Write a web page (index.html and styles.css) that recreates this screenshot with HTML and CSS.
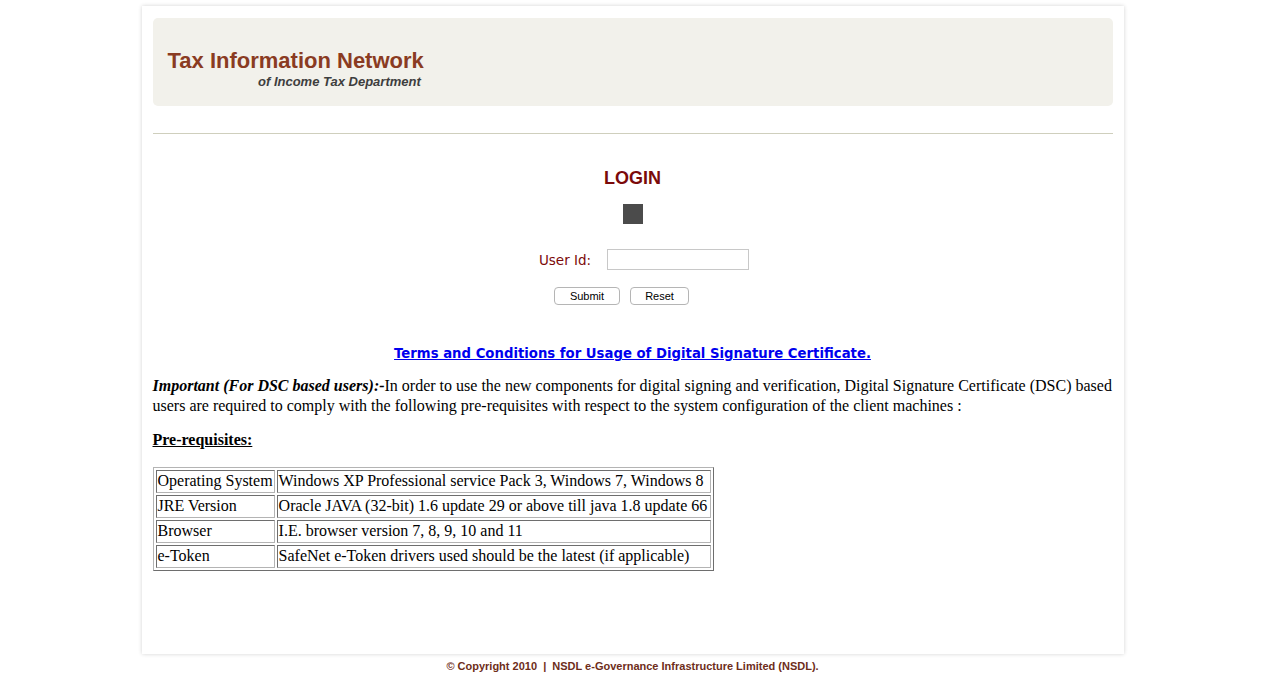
FILE: index.html
```html
<!DOCTYPE html>
<html>
<head>
<meta charset="utf-8">
<title>TIN Login</title>
<link rel="stylesheet" href="styles.css">
</head>
<body>
<div class="page">
  <div class="header">
    <div class="brand">
      <div class="brand-title">Tax Information Network</div>
      <div class="brand-sub">of Income Tax Department</div>
    </div>
  </div>
  <div class="rule"></div>
  <div class="login">
    <div class="login-title">LOGIN</div>
    <div class="square"></div>
    <div class="field">
      <label class="field-label">User Id:</label>
      <input class="field-input" type="text">
    </div>
    <div class="buttons">
      <button class="btn btn-submit">Submit</button>
      <button class="btn btn-reset">Reset</button>
    </div>
  </div>
  <div class="terms"><a href="#">Terms and Conditions for Usage of Digital Signature Certificate.</a></div>
  <p class="note"><b><i>Important (For DSC based users):-</i></b>In order to use the new components for digital signing and verification, Digital Signature Certificate (DSC) based users are required to comply with the following pre-requisites with respect to the system configuration of the client machines :</p>
  <p class="prereq">Pre-requisites:</p>
  <table class="req">
    <tr><td>Operating System</td><td class="wide">Windows XP Professional service Pack 3, Windows 7, Windows 8</td></tr>
    <tr><td>JRE Version</td><td class="wide">Oracle JAVA (32-bit) 1.6 update 29 or above till java 1.8 update 66</td></tr>
    <tr><td>Browser</td><td class="wide">I.E. browser version 7, 8, 9, 10 and 11</td></tr>
    <tr><td>e-Token</td><td class="wide">SafeNet e-Token drivers used should be the latest (if applicable)</td></tr>
  </table>
</div>
<div class="footer">© Copyright 2010 &nbsp;|&nbsp; NSDL e-Governance Infrastructure Limited (NSDL).</div>
</body>
</html>
```
FILE: styles.css
```css
html, body { margin: 0; padding: 0; background: #fff; }
body { font-family: "Liberation Serif", "Times New Roman", serif; color: #000; }
.page {
  width: 960px;
  margin: 6px auto 0;
  padding: 12px 11px 0;
  height: 636px;
  background: #fff;
  box-shadow: 0 0 4px rgba(0,0,0,0.18);
}
.header {
  height: 88px;
  background: #f2f1eb;
  border-radius: 5px;
  display: flex;
  align-items: flex-start;
}
.brand { margin: 30px 0 0 15px; display: flex; flex-direction: column; align-items: flex-end; }
.brand-title {
  font-family: "Liberation Sans", Arial, sans-serif;
  font-weight: bold;
  font-size: 22px;
  line-height: 26px;
  color: #8a3b22;
}
.brand-sub {
  font-family: "Liberation Sans", Arial, sans-serif;
  font-weight: bold;
  font-style: italic;
  font-size: 13px;
  line-height: 14px;
  color: #3e3e3e;
  margin-right: 3px;
  margin-top: 1px;
}
.rule { height: 1px; background: #cfcfbd; margin-top: 27px; }
.login { display: flex; flex-direction: column; align-items: center; }
.login-title {
  margin-top: 33px;
  font-family: "Liberation Sans", Arial, sans-serif;
  font-weight: bold;
  font-size: 18px;
  line-height: 22px;
  color: #7b0a0a;
}
.square { width: 20px; height: 20px; background: #4b4b4b; margin-top: 15px; }
.field { display: flex; align-items: center; margin-top: 25px; margin-left: 23px; }
.field-label {
  font-family: "DejaVu Sans", Verdana, sans-serif;
  font-size: 13.5px;
  color: #7b0a0a;
  margin-right: 16px;
}
.field-input {
  width: 142px; height: 21px; box-sizing: border-box;
  border: 1px solid #c8c8c8; padding: 0; margin: 0;
}
.buttons { display: flex; gap: 10px; margin-top: 17px; margin-right: 22px; }
.btn {
  height: 18px; box-sizing: border-box;
  font-family: "Liberation Sans", Arial, sans-serif;
  font-size: 11px;
  background: #fff;
  border: 1px solid #b5b5b5;
  border-radius: 4px;
  padding: 0;
  color: #000;
}
.btn-submit { width: 66px; }
.btn-reset { width: 59px; }
.terms { text-align: center; margin-top: 40px; line-height: 16px; }
.terms a {
  font-family: "DejaVu Sans", Verdana, sans-serif;
  font-weight: bold;
  font-size: 13.25px;
  color: #0000ee;
}
.note { margin: 14px 0 0; font-size: 16px; line-height: 20px; }
.prereq { margin: 14px 0 0; font-weight: bold; text-decoration: underline; font-size: 16px; line-height: 20px; }
.req {
  margin-top: 17px;
  border: 1px solid;
  border-color: #b4b4b4 #6e6e6e #6e6e6e #b4b4b4;
  border-spacing: 2px;
  font-size: 16px;
}
.req td {
  border: 1px solid;
  border-color: #6e6e6e #b4b4b4 #b4b4b4 #6e6e6e;
  padding: 0 1px 2px;
  line-height: 19px;
  white-space: nowrap;
}
.req td.wide { padding-right: 3px; }
.footer {
  text-align: center;
  margin-top: 6px;
  font-family: "Liberation Sans", Arial, sans-serif;
  font-weight: bold;
  font-size: 11px;
  color: #6e2d1a;
}
```
